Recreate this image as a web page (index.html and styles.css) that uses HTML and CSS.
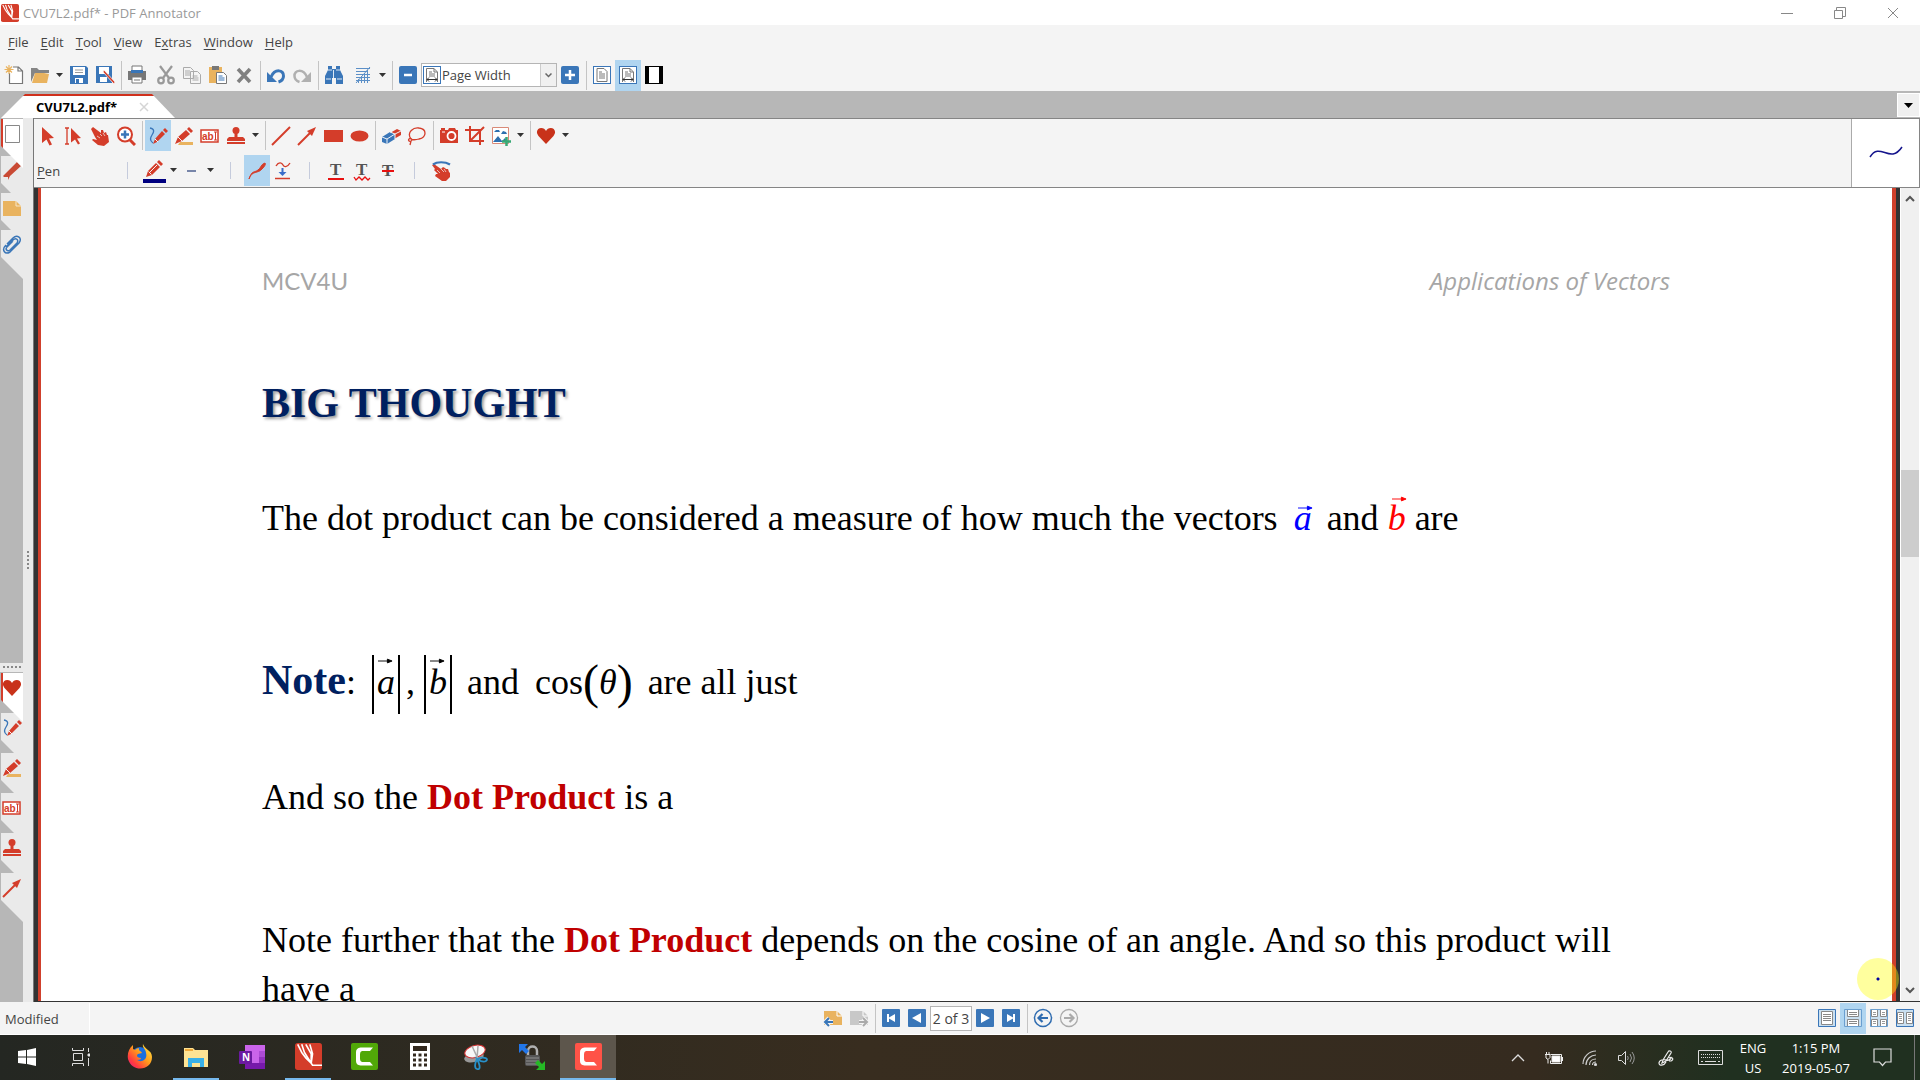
FILE: index.html
```html
<!DOCTYPE html>
<html lang="en">
<head>
<meta charset="utf-8">
<title>CVU7L2.pdf* - PDF Annotator</title>
<link rel="stylesheet" href="styles.css">
</head>
<body>
<svg class="defs" aria-hidden="true">
  <symbol id="logo" viewBox="0 0 20 20"><rect width="20" height="20" rx="2" fill="#d43d2a"/><path d="M2 1l3 6 3 4 4 4M5 1l2 6 5 8M8 1l4 7v7M11 1l2 7-1 7 1 1.500h7" fill="none" stroke="#fff" stroke-width="1.200"/></symbol>
  <symbol id="pencil" viewBox="0 0 20 20"><path d="M2 18l2-6 8-8 4 4-8 8z M13 3l2-2 4 4-2 2z" fill="#d43d2a"/><path d="M4.500 12.500l3 3M6 13l7-7" stroke="#f4f4f4" stroke-width="1"/></symbol>
  <symbol id="pen" viewBox="0 0 20 20"><path d="M2 2c5 1 4 4 2 7s-2 6 1 8" fill="none" stroke="#3a76b8" stroke-width="1.300"/><path d="M5 18l2-5 7-8 3 3-8 8z M15 4l2-2 3 3-2 2z" fill="#d43d2a"/><path d="M7 13l3 3" stroke="#f4f4f4"/></symbol>
  <symbol id="marker" viewBox="0 0 20 20"><path d="M6 16h13v3H4z" fill="#e9b35f"/><path d="M1 18l3-7 8-7 4 4-8 7z M13 3l2-2 4 4-2 2z" fill="#d43d2a"/><path d="M4 11l4 4" stroke="#f4f4f4"/></symbol>
  <symbol id="stamp" viewBox="0 0 20 20"><circle cx="10" cy="4.500" r="3.500" fill="#d43d2a"/><path d="M8.500 7h3v4H17l2 2v2H1v-2l2-2h5.500z" fill="#d43d2a"/><path d="M1 17h18" stroke="#d43d2a" stroke-width="2"/></symbol>
  <symbol id="arrow" viewBox="0 0 20 20"><path d="M1 19L14 6" stroke="#d43d2a" stroke-width="2"/><path d="M10 5l9-4-4 9z" fill="#d43d2a"/></symbol>
  <symbol id="heart" viewBox="0 0 20 20"><path d="M10 18L2.500 10C-1 5.500 2 2 5.200 2 7.500 2 9 3 10 5c1-2 2.500-3 4.800-3C18 2 21 5.500 17.500 10z" fill="#c8321a"/></symbol>
  <symbol id="cursor" viewBox="0 0 20 20"><path d="M4 1l12 11-5 .5 3 6-2.500 1-3-6L4 17z" fill="#d43d2a"/></symbol>
  <symbol id="hand" viewBox="0 0 20 20"><path d="M1 3l2-2 8 6V4l2 0 1 3 2-1 1 3 1 0 1 7-5 4-6-1-6-5 1-1 4 1-2-3z" fill="#d43d2a"/><path d="M10 8l2 2M13 7l2 3M7 10l3 2" stroke="#f4f4f4" stroke-width=".7"/></symbol>
  <symbol id="caret" viewBox="0 0 8 5"><path d="M0 0h7L3.500 4z" fill="#333"/></symbol>
  <symbol id="page" viewBox="0 0 20 20"><rect x="1.500" y="1.500" width="17" height="17" fill="#fff" stroke="#3a76b8"/><path d="M5 3.500h7l3 3v10H5z" fill="#fff" stroke="#777"/><path d="M7 7h3M7 9h6M7 11h6M7 13h6" stroke="#777"/></symbol>
  <symbol id="pagewidth" viewBox="0 0 20 20"><rect x="1.500" y="1.500" width="17" height="17" fill="#fff" stroke="#3a76b8"/><path d="M4.500 17V3.500H12l3.500 3.500v10M12 3.500V7h3" fill="none" stroke="#777"/><path d="M7 7h3M7 9h6M7 11h6" stroke="#777"/><path d="M5 14.500h10M7 12.500l-2 2 2 2M13 12.500l2 2-2 2" fill="none" stroke="#333"/></symbol>
  <symbol id="camtasia" viewBox="0 0 27 27"><rect width="27" height="27" rx="2" fill="currentColor"/><path d="M22 4.500H9.500Q5 5 5 9v9q0 4 4.500 4.500H22l-3-3.500h-8q-2-.5-2-3v-5q0-2.500 2-3h8z" fill="#fff"/></symbol>
</svg>

<header class="titlebar">
  <svg class="app-logo"><use href="#logo"/></svg>
  <span class="title">CVU7L2.pdf* - PDF Annotator</span>
  <div class="win-controls">
    <button aria-label="Minimize"><svg width="12" height="12"><path d="M0 6.500h12" stroke="#888"/></svg></button>
    <button aria-label="Restore"><svg width="12" height="12" fill="none" stroke="#888"><path d="M.5 3.500h8v8h-8zM2.500 3.500v-3h9v9h-3"/></svg></button>
    <button aria-label="Close"><svg width="12" height="12"><path d="M1 1l10 10M11 1L1 11" stroke="#888"/></svg></button>
  </div>
</header>

<nav class="menubar">
  <button><u>F</u>ile</button><button><u>E</u>dit</button><button><u>T</u>ool</button><button><u>V</u>iew</button><button>E<u>x</u>tras</button><button><u>W</u>indow</button><button><u>H</u>elp</button>
</nav>

<div class="toolbar">
  <button class="tb" aria-label="New"><svg viewBox="0 0 20 20"><path d="M5.500 8v10.500h13V6l-4-4H9M14 2v4h4" fill="#fff" stroke="#777" stroke-width="1.200"/><path d="M5 0v9M.5 4.500h9M2 1.500l6 6M8 1.500l-6 6" stroke="#e9b35f" stroke-width="1.200"/></svg></button>
  <button class="tb" aria-label="Open"><svg viewBox="0 0 20 20"><path d="M1 3h6l2 2h10v3H5L1 17z" fill="#858585"/><path d="M5 8h9l5 1-2 9H2z" fill="#e9b35f"/></svg></button>
  <button class="drop" aria-label="Open recent"><svg><use href="#caret"/></svg></button>
  <button class="tb" aria-label="Save"><svg viewBox="0 0 20 20"><path d="M1 1h16l2 2v16H1z" fill="#3a76b8"/><path d="M4 2h12v8H4zM6 13h8v5H6z" fill="#fff"/><path d="M6 5h8M6 7.500h8" stroke="#999"/><path d="M7 14h3v4H7z" fill="#3a76b8"/></svg></button>
  <button class="tb" aria-label="Save as"><svg viewBox="0 0 20 20"><path d="M1 1h16v17H1z" fill="#3a76b8"/><path d="M4 2h10v7H4zM5 12h7v5H5z" fill="#fff"/><path d="M9 5l11 12-1 2L8 7z" fill="#d43d2a" stroke="#fff" stroke-width=".7"/></svg></button>
  <span class="sep"></span>
  <button class="tb gap" aria-label="Print"><svg viewBox="0 0 20 20"><path d="M5 1h10v6H5z" fill="#fff" stroke="#777"/><path d="M1 6h18v9H1z" fill="#777"/><path d="M4 5h12v3H4z" fill="#3a76b8"/><path d="M5 12h10v6H5z" fill="#fff" stroke="#777"/><path d="M7 15h6" stroke="#777"/></svg></button>
  <button class="tb" aria-label="Cut"><svg viewBox="0 0 20 20" fill="none" stroke="#999" stroke-width="2.200"><path d="M4 1l9 12M16 1L7 13"/><circle cx="5" cy="15.500" r="2.800"/><circle cx="15" cy="15.500" r="2.800"/></svg></button>
  <button class="tb" aria-label="Copy"><svg viewBox="0 0 20 20" fill="#f4f4f4" stroke="#aaa"><path d="M1.500 2.500h7l3 3v8h-10zM8.500 6.500h7l3 3v9h-10z"/><path d="M3 6h5M3 8h5M3 10h5M10.500 11h5M10.500 13h6M10.500 15h6"/></svg></button>
  <button class="tb" aria-label="Paste"><svg viewBox="0 0 20 20"><path d="M1 2h13v16H1z" fill="#e9b35f"/><path d="M4 1h7v4H4z" fill="#777"/><path d="M8.500 7.500h7l3 3v8h-10z" fill="#fff" stroke="#777"/><path d="M10.500 11h4M10.500 13h6M10.500 15h6" stroke="#3a76b8"/></svg></button>
  <button class="tb" aria-label="Delete"><svg viewBox="0 0 20 20"><path d="M4 4l12 13M16 4L4 17" stroke="#808080" stroke-width="3.600"/></svg></button>
  <span class="sep"></span>
  <button class="tb" aria-label="Undo"><svg viewBox="0 0 20 20"><path d="M5 12C9 3 18 5 17.500 11c0 3-2 5-5 6" fill="none" stroke="#3a76b8" stroke-width="3"/><path d="M1 7v10h10z" fill="#3a76b8"/></svg></button>
  <button class="tb" aria-label="Redo"><svg viewBox="0 0 20 20"><path d="M15 12C11 3 2 5 2.500 11c0 3 2 5 5 6" fill="none" stroke="#b0b0b0" stroke-width="2.500"/><path d="M19 7v10H9z" fill="#b0b0b0"/></svg></button>
  <span class="sep"></span>
  <button class="tb gap" aria-label="Find"><svg viewBox="0 0 20 20"><path d="M4 1h4v3h4V1h4v4l3 6v8h-7v-6H8v6H1v-8l3-6z" fill="#3a76b8"/><path d="M4 5h4M12 5h4M9.500 5v8M2 14h5M13 14h5" stroke="#dce8f4"/></svg></button>
  <button class="tb" aria-label="Grid"><svg viewBox="0 0 20 20" stroke="#5b8fc7" fill="none"><path d="M3 3.500h14M3 6.500h11M3 9.500h14M3 12.500h14M3 15.500h14M5.500 14v4M8.500 11v7M11.500 8v10M14.500 5v13M3 18L17 2"/></svg></button>
  <button class="drop" aria-label="Grid options"><svg><use href="#caret"/></svg></button>
  <span class="sep"></span>
  <button class="tb" aria-label="Zoom out"><svg viewBox="0 0 20 20"><rect x="1" y="1" width="18" height="18" rx="2" fill="#3a76b8"/><path d="M6 10h8" stroke="#fff" stroke-width="2.500"/></svg></button>
  <div class="zoom-box"><svg class="zoom-icon"><use href="#pagewidth"/></svg><select aria-label="Zoom"><option>Page Width</option></select><span class="zoom-arrow"><svg width="7" height="5"><path d="M.5.5l3 3 3-3" fill="none" stroke="#666" stroke-width="1.500"/></svg></span></div>
  <button class="tb" aria-label="Zoom in"><svg viewBox="0 0 20 20"><rect x="1" y="1" width="18" height="18" rx="2" fill="#3a76b8"/><path d="M5 10h10M10 5v10" stroke="#fff" stroke-width="2.500"/></svg></button>
  <span class="sep"></span>
  <button class="tb" aria-label="Full page"><svg><use href="#page"/></svg></button>
  <button class="tb on" aria-label="Page width"><svg><use href="#pagewidth"/></svg></button>
  <button class="tb" aria-label="Full screen"><svg viewBox="0 0 20 20"><path d="M1 1h18v18H1z"/><path d="M5 2h10v16H5z" fill="#fff"/></svg></button>
</div>

<div class="tabstrip">
  <div class="doc-tab"><span>CVU7L2.pdf*</span><button aria-label="Close tab"><svg width="10" height="10"><path d="M1 1l8 8M9 1L1 9" stroke="#d5d5d5" stroke-width="1.500"/></svg></button></div>
  <button class="tab-list" aria-label="Documents"><svg width="9" height="5"><path d="M0 0h9L4.500 5z"/></svg></button>
</div>

<div class="workspace">
  <aside class="rail">
    <nav class="side-tabs">
      <button class="active" aria-label="Pages"><svg viewBox="0 0 20 20"><path d="M3.500 1.500h14v17h-14z" fill="#fff" stroke="#888"/></svg></button>
      <button aria-label="Annotations"><svg viewBox="0 0 20 20"><path d="M15 1l4 4L8 15l-2 4v-3H2l-1-1z" fill="#c94a34"/></svg></button>
      <button aria-label="Notes"><svg viewBox="0 0 20 20"><path d="M1 3h13l5 5v10H1z" fill="#e9b35f"/><path d="M14 3v5h5" fill="none" stroke="#f8e6c8"/></svg></button>
      <button aria-label="Attachments"><svg viewBox="0 0 20 20"><path d="M4 12l7-7c3-3 6 0 4 3l-7 7c-3 2-5-1-3-3l6-6M4 10c-5 5-1 10 4 7l9-9c4-5-2-9-6-5L5 9" fill="none" stroke="#3a76b8" stroke-width="1.500"/></svg></button>
    </nav>
    <div class="rail-dots"></div>
    <nav class="side-tabs favorites">
      <button class="active" aria-label="Favorites"><svg><use href="#heart"/></svg></button>
      <button aria-label="Pen"><svg><use href="#pen"/></svg></button>
      <button aria-label="Marker"><svg><use href="#marker"/></svg></button>
      <button aria-label="Text"><svg viewBox="0 0 20 20"><rect x="1" y="4" width="17" height="12" fill="#fff" stroke="#d43d2a" stroke-width="1.500"/><text x="2" y="14" class="glyph-ab">ab</text><path d="M14 6h3M14 14h3M15.500 6v8" stroke="#d43d2a" fill="none"/></svg></button>
      <button aria-label="Stamp"><svg><use href="#stamp"/></svg></button>
      <button aria-label="Arrow"><svg><use href="#arrow"/></svg></button>
    </nav>
  </aside>
  <div class="splitter"></div>
  <div class="main">
    <div class="tools">
      <div class="tool-rows">
        <div class="tool-row">
          <button class="tb" aria-label="Select"><svg><use href="#cursor"/></svg></button>
          <button class="tb" aria-label="Select text"><svg viewBox="0 0 20 20"><path d="M1 2h4M1 18h4M3 2v16" stroke="#d43d2a" stroke-width="1.300"/><path d="M7 2l10 10-4 .5 3 5-2 1-3-5-4 3z" fill="#d43d2a"/></svg></button>
          <button class="tb" aria-label="Pan"><svg><use href="#hand"/></svg></button>
          <button class="tb" aria-label="Zoom"><svg viewBox="0 0 20 20"><circle cx="9" cy="8.500" r="7" fill="#fff" stroke="#d43d2a" stroke-width="2"/><path d="M14 14l5 5" stroke="#d43d2a" stroke-width="3"/><path d="M5 8.500h8M9 4.500v8" stroke="#3a76b8" stroke-width="2.500"/></svg></button>
          <span class="sep"></span>
          <button class="tb on" aria-label="Pen tool"><svg><use href="#pen"/></svg></button>
          <button class="tb" aria-label="Marker tool"><svg><use href="#marker"/></svg></button>
          <button class="tb" aria-label="Text tool"><svg viewBox="0 0 20 20"><rect x="1" y="4" width="17" height="12" fill="#fff" stroke="#d43d2a" stroke-width="1.500"/><text x="2" y="14" class="glyph-ab">ab</text><path d="M14 6h3M14 14h3M15.500 6v8" stroke="#d43d2a" fill="none"/></svg></button>
          <button class="tb" aria-label="Stamp tool"><svg><use href="#stamp"/></svg></button>
          <button class="drop" aria-label="Stamps"><svg><use href="#caret"/></svg></button>
          <span class="sep"></span>
          <button class="tb" aria-label="Line"><svg viewBox="0 0 20 20"><path d="M1 19L19 1" stroke="#d43d2a" stroke-width="2"/></svg></button>
          <button class="tb" aria-label="Arrow tool"><svg><use href="#arrow"/></svg></button>
          <button class="tb" aria-label="Rectangle"><svg viewBox="0 0 20 20"><path d="M1 4h19v12H1z" fill="#d43d2a"/></svg></button>
          <button class="tb" aria-label="Ellipse"><svg viewBox="0 0 20 20"><ellipse cx="10.500" cy="10" rx="9" ry="5.500" fill="#d43d2a"/></svg></button>
          <span class="sep"></span>
          <button class="tb" aria-label="Eraser"><svg viewBox="0 0 20 20"><path d="M9 7l7-4 4 2v4l-7 4z" fill="#d43d2a"/><path d="M1 11l8-5 5 2v5l-8 5-5-2z" fill="#3a76b8"/><path d="M1 11l5 2 8-5 6-3M6 13v5M9 6l5 2v5" fill="none" stroke="#f0f4f8"/></svg></button>
          <button class="tb" aria-label="Lasso"><svg viewBox="0 0 20 20"><path d="M4 13C-1 6 7 1 12 2c8 1 8 9 0 11-3 1-7 1-8 0m-2 0c2-2 4 1 2 2s-3-1-2-2m2 2l-1 4" fill="none" stroke="#d43d2a" stroke-width="1.300"/></svg></button>
          <span class="sep"></span>
          <button class="tb" aria-label="Snapshot"><svg viewBox="0 0 20 20"><path d="M1 4h1V2h4v2h3l1-2h6l1 2h2v13H1z" fill="#d43d2a"/><circle cx="12.500" cy="10" r="4" fill="#d43d2a" stroke="#fff" stroke-width="1.800"/><path d="M3 6h3" stroke="#fff"/></svg></button>
          <button class="tb" aria-label="Crop"><svg viewBox="0 0 20 20"><path d="M5 0v15h14M0 4h15v15M5 15L19 1" fill="none" stroke="#d43d2a" stroke-width="2"/></svg></button>
          <button class="tb" aria-label="Insert image"><svg viewBox="0 0 20 20"><path d="M1.500 1.500h16v16h-16z" fill="#fff" stroke="#d98a78"/><path d="M2 16l5-6 4 5 3-3 3 4zM3 6l2-2h3l1 2zM10 8l2-3 3 1 1 2z" fill="#2e6fae"/><path d="M11 15.500h9M15.500 11v9" stroke="#37a874" stroke-width="2.500"/></svg></button>
          <button class="drop" aria-label="Image options"><svg><use href="#caret"/></svg></button>
          <span class="sep"></span>
          <button class="tb" aria-label="Favorite"><svg><use href="#heart"/></svg></button>
          <button class="drop" aria-label="Favorites list"><svg><use href="#caret"/></svg></button>
        </div>
        <div class="tool-row">
          <span class="tool-name"><u>P</u>en</span>
          <span class="sep wide"></span>
          <button class="tb color" aria-label="Color"><svg><use href="#pencil"/></svg></button>
          <button class="drop" aria-label="Colors"><svg><use href="#caret"/></svg></button>
          <button class="tb narrow" aria-label="Line width"><svg viewBox="0 0 20 20"><path d="M5 10h9" stroke="#334a80" stroke-width="1.300"/></svg></button>
          <button class="drop" aria-label="Line widths"><svg><use href="#caret"/></svg></button>
          <span class="sep wide"></span>
          <button class="tb on" aria-label="Pressure"><svg viewBox="0 0 20 20"><path d="M2 18c3-9 5-6 9-9 3-2 3-6 7-7 1 1 0 3-3 6-4 5-10 1-13 10" fill="#d43d2a" stroke="#d43d2a"/></svg></button>
          <button class="tb" aria-label="Smoothing"><svg viewBox="0 0 20 20"><path d="M3 5c3-5 6-3 7-1s4 3 7-2M2 17.500h15" fill="none" stroke="#d43d2a" stroke-width="1.400"/><path d="M8.500 7h2v4h3l-4 4-4-4h3z" fill="#3a6dc8"/></svg></button>
          <span class="sep wide"></span>
          <button class="tb" aria-label="Underline"><svg viewBox="0 0 20 20"><text x="4" y="14" class="glyph-t">T</text><path d="M2 18h16" stroke="#e81010" stroke-width="2"/></svg></button>
          <button class="tb" aria-label="Squiggly"><svg viewBox="0 0 20 20"><text x="4" y="14" class="glyph-t">T</text><path d="M2 16l2 3 3-3 3 3 3-3 3 3 2-2" fill="none" stroke="#e81010" stroke-width="1.300"/></svg></button>
          <button class="tb" aria-label="Strikeout"><svg viewBox="0 0 20 20"><text x="4" y="15" class="glyph-t">T</text><path d="M4 10h12" stroke="#e81010" stroke-width="2"/></svg></button>
          <span class="sep wide"></span>
          <button class="tb" aria-label="Touch"><svg viewBox="0 0 20 20"><path d="M1 4l2-1 7 5 2-2 2 1 1 1 2 0 1 3 1 1v4l-4 4h-4l-7-5 1-2 2 0-4-4 1-1z" fill="#d43d2a"/><path d="M2 3.500c4-3 12-3 17 0" fill="none" stroke="#3a76b8" stroke-width="2.200"/><path d="M10 8l3 3M13 8l2 3M6 9l3 3" stroke="#f4f4f4" stroke-width=".7"/></svg></button>
        </div>
      </div>
      <div class="preview"><svg width="34" height="14"><path d="M1 11C11-5 21 19 33 1" fill="none" stroke="#14148c" stroke-width="1.500"/></svg></div>
    </div>
    <div class="viewer">
      <article class="page">
        <div class="page-head"><span>MCV4U</span><em>Applications of Vectors</em></div>
        <h1>BIG THOUGHT</h1>
        <p class="measure">The dot product can be considered a measure of how much the vectors <span class="math"><i class="vec blue">a<svg viewBox="0 0 16 6"><path d="M0 3h11M10 1l5 2-5 2z"/></svg></i></span> and <i class="vec red tall">b<svg viewBox="0 0 16 6"><path d="M0 3h11M10 1l5 2-5 2z"/></svg></i> are</p>
        <p class="note"><strong>Note</strong>: <span class="math"><i class="vec abs">a<svg viewBox="0 0 16 6"><path d="M0 3h11M10 1l5 2-5 2z"/></svg></i><span class="comma">,</span> <i class="vec abs">b<svg viewBox="0 0 16 6"><path d="M0 3h11M10 1l5 2-5 2z"/></svg></i></span> and <span class="math">cos<span class="paren">(</span><i>θ</i><span class="paren">)</span></span> are all just</p>
        <p class="so">And so the <b>Dot Product</b> is a</p>
        <p class="further">Note further that the <b>Dot Product</b> depends on the cosine of an angle. And so this product will have a</p>
      </article>
      <div class="scrollbar">
        <button aria-label="Scroll up"><svg width="10" height="7"><path d="M1 6l4-4 4 4" fill="none" stroke="#555" stroke-width="2"/></svg></button>
        <div class="track"><div class="thumb"></div></div>
        <button aria-label="Scroll down"><svg width="10" height="7"><path d="M1 1l4 4 4-4" fill="none" stroke="#555" stroke-width="2"/></svg></button>
      </div>
      <div class="pen-spot"></div>
    </div>
  </div>
</div>

<footer class="status">
  <div class="status-left"><span>Modified</span></div>
  <div class="status-nav">
    <button class="tb" aria-label="Previous note"><svg viewBox="0 0 20 20"><path d="M1 3h13l5 5v9H1z" fill="#e9b35f"/><path d="M14 3v5h5" stroke="#fff" fill="none"/><path d="M10 14H3M6 10l-4 4 4 4" stroke="#f4f4f4" stroke-width="4" fill="none"/><path d="M10 14H3M6 10l-4 4 4 4" stroke="#3a76b8" stroke-width="2" fill="none"/></svg></button>
    <button class="tb" aria-label="Next note"><svg viewBox="0 0 20 20"><path d="M1 3h13l5 5v9H1z" fill="#c8c8c8"/><path d="M14 3v5h5" stroke="#fff" fill="none"/><path d="M10 14h7M14 10l4 4-4 4" stroke="#f4f4f4" stroke-width="4" fill="none"/><path d="M10 14h7M14 10l4 4-4 4" stroke="#aaa" stroke-width="2" fill="none"/></svg></button>
    <span class="sep"></span>
    <button class="tb" aria-label="First page"><svg viewBox="0 0 20 20"><rect x="1" y="1" width="18" height="18" rx="1" fill="#3a76b8"/><path d="M6 6h2v3.500L14 6v8l-6-3.500V14H6z" fill="#fff"/></svg></button>
    <button class="tb" aria-label="Previous page"><svg viewBox="0 0 20 20"><rect x="1" y="1" width="18" height="18" rx="1" fill="#3a76b8"/><path d="M14 5v10l-9-5z" fill="#fff"/></svg></button>
    <input aria-label="Page" value="2 of 3">
    <button class="tb" aria-label="Next page"><svg viewBox="0 0 20 20"><rect x="1" y="1" width="18" height="18" rx="1" fill="#3a76b8"/><path d="M6 5v10l9-5z" fill="#fff"/></svg></button>
    <button class="tb" aria-label="Last page"><svg viewBox="0 0 20 20"><rect x="1" y="1" width="18" height="18" rx="1" fill="#3a76b8"/><path d="M14 6h-2v3.500L6 6v8l6-3.500V14h2z" fill="#fff"/></svg></button>
    <span class="sep"></span>
    <button class="tb" aria-label="Back"><svg viewBox="0 0 20 20" fill="none" stroke="#2f6cb0"><circle cx="10" cy="10" r="8.500" stroke-width="1.500"/><path d="M15 10H6M9.500 6L5.500 10l4 4" stroke-width="2.200"/></svg></button>
    <button class="tb" aria-label="Forward"><svg viewBox="0 0 20 20" fill="none" stroke="#aaa"><circle cx="10" cy="10" r="8.500" stroke-width="1.300"/><path d="M5 10h9M10.500 6l4 4-4 4" stroke-width="2.200"/></svg></button>
  </div>
  <div class="status-views">
    <button class="tb" aria-label="Single page"><svg viewBox="0 0 20 20"><path d="M1.500 1.500h17v17h-17z" fill="#c9dff0" stroke="#3a76b8"/><path d="M4.500 3.500h11v13h-11z" fill="#fff" stroke="#888"/><path d="M6 6.500h8M6 8.500h8M6 10.500h8M6 12.500h8" stroke="#888"/></svg></button>
    <button class="tb on" aria-label="Continuous"><svg viewBox="0 0 20 20"><path d="M1.500 1.500h17v17h-17z" fill="#c9dff0" stroke="#6a9fd0"/><path d="M4.500 2v6.500h11V2M4.500 18v-6.500h11V18" fill="#fff" stroke="#888"/><path d="M6 4.500h8M6 6.500h8M6 13.500h8M6 15.500h8" stroke="#888"/></svg></button>
    <button class="tb" aria-label="Two pages continuous"><svg viewBox="0 0 20 20"><path d="M1.500 1.500h17v17h-17z" fill="#c9dff0" stroke="#6a9fd0"/><path d="M2.500 2v6.500h6V2M11.500 2v6.500h6V2M2.500 18v-6.500h6V18M11.500 18v-6.500h6V18" fill="#fff" stroke="#888"/><path d="M4 4.500h3M13 4.500h3M4 6.500h3M13 6.500h3M4 13.500h3M13 13.500h3M4 15.500h3M13 15.500h3" stroke="#999"/></svg></button>
    <button class="tb" aria-label="Two pages"><svg viewBox="0 0 20 20"><path d="M1.500 1.500h17v17h-17z" fill="#c9dff0" stroke="#3a76b8"/><path d="M2.500 4.500h6v11h-6zM11.500 4.500h6v11h-6z" fill="#fff" stroke="#888"/><path d="M4 6.500h3M13 6.500h3M4 8.500h3M13 8.500h3M4 10.500h3M13 10.500h3M4 12.500h3M13 12.500h3" stroke="#999"/></svg></button>
  </div>
</footer>

<div class="taskbar">
  <button aria-label="Start"><svg width="18" height="18" fill="#fff"><path d="M0 3l8-1v6.500H0zM9 2l9-2v8.500H9zM0 9.500h8V16l-8-1zM9 9.500h9V18l-9-2z"/></svg></button>
  <button class="task-view" aria-label="Task view"><svg width="18" height="18" fill="none" stroke="#ddd"><path d="M.5 0v2.500h11V0M.5 18v-2.500h11V18M1.500 5.500h9v7h-9zM16.500 0v4M16.500 10v8"/><path d="M16 6h2v2h-2z" fill="#fff"/></svg></button>
  <button class="app" aria-label="Firefox"><svg width="26" height="26" viewBox="0 0 26 26"><defs><linearGradient id="fx" x1="1" y1="0" x2="0" y2="1"><stop offset="0" stop-color="#fff14a"/><stop offset=".45" stop-color="#ff9a1c"/><stop offset=".75" stop-color="#ff3b3f"/><stop offset="1" stop-color="#e3168a"/></linearGradient></defs><circle cx="13" cy="12" r="9" fill="#1a6fe0"/><path d="M16 0c-1 4 3 5 3 9 2 7-5 10-9 7 3 0 4-1 4-2-4 0-5-3-3-4l4-1c-1-2-4-2-3-5-2 0-3 1-4 2L6 5V1C2 4 0 10 1 15c4 14 24 12 24-2C25 6 18 6 16 0z" fill="url(#fx)"/></svg></button>
  <button class="app open" aria-label="File Explorer"><svg width="24" height="20"><path d="M0 1h9l2 2h13v17H0z" fill="#fde394"/><path d="M1 3h8" stroke="#f0a93a" stroke-width="2"/><path d="M4 20v-9h16v9h-4v-4H8v4z" fill="#39b0e8"/></svg></button>
  <button class="app" aria-label="OneNote"><svg width="26" height="24"><path d="M6 0h20v24H6z" fill="#ca64ea"/><path d="M20 6h6v6h-6z" fill="#ae4bd5"/><path d="M20 12h6v6h-6z" fill="#9332bf"/><path d="M6 18h20v6H6z" fill="#7719aa"/><rect y="6" width="13" height="13" rx="1" fill="#6b1aa0"/><text x="3" y="16" class="glyph-n">N</text></svg></button>
  <button class="app open" aria-label="PDF Annotator"><svg width="27" height="27"><use href="#logo"/></svg></button>
  <button class="app green" aria-label="Camtasia"><svg width="27" height="27"><use href="#camtasia"/></svg></button>
  <button class="app" aria-label="Calculator"><svg width="20" height="27"><path d="M0 0h20v27H0z" fill="#fff"/><path d="M3 3h14v5H3z" fill="#33291e"/><path d="M3 12h14M3 17h14M3 22h14" stroke="#33291e" stroke-width="3" stroke-dasharray="3 2.500"/></svg></button>
  <button class="app" aria-label="Snipping Tool"><svg width="26" height="26"><ellipse cx="11" cy="13" rx="10" ry="5" fill="#999" transform="rotate(-15 11 13)"/><ellipse cx="12" cy="7.500" rx="10.500" ry="6" fill="#f8f8f8" stroke="#d03030" transform="rotate(-15 12 7.500)"/><path d="M9 2l6 13M15 2l-1 13" stroke="#aaa" stroke-width="1.500"/><path d="M14 15c8-3 12 0 9 2s-6 0-9-2c4 8 3 11 0 10s-2-6 0-10" fill="none" stroke="#2890c8" stroke-width="1.800"/></svg></button>
  <button class="app" aria-label="Screen lock"><svg width="26" height="26"><path d="M9 12V7c0-6 9-6 9 0v5" fill="none" stroke="#b0b0b0" stroke-width="2.500"/><rect x="6" y="11" width="15" height="11" rx="2" fill="#555"/><path d="M7 14h13M7 17h13M7 20h13" stroke="#909090"/><path d="M0 0h9L6 3l4 4-3 3-4-4-3 3z" fill="#2276e8"/><path d="M26 26h-9l3-3-4-4 3-3 4 4 3-3z" fill="#25b825"/></svg></button>
  <button class="app current" aria-label="Camtasia Recorder"><svg width="27" height="27"><use href="#camtasia"/></svg></button>
  <div class="tray">
    <button aria-label="Hidden icons"><svg width="14" height="8"><path d="M1 7l6-6 6 6" fill="none" stroke="#ddd" stroke-width="1.300"/></svg></button>
    <button aria-label="Battery"><svg width="18" height="12" fill="none" stroke="#eee"><path d="M5.500 2.500h11v9h-11v-3M17.500 5v4"/><path d="M7 4h8v6H7z" fill="#fff"/><path d="M0 2.500h5v3l-2 2v4M1.500 0v2M4 0v2M1 3v3l2 1.500"/></svg></button>
    <button aria-label="Wi-Fi"><svg width="16" height="16" fill="none" stroke="#ccc" stroke-width="1.200"><path d="M1 14C1 7 7 1 14 1M4 15c0-6 5-10 10-10M7.500 15c0-4 3-6 6.500-6M10.500 15c0-2 1.500-3 3.500-3"/><circle cx="13.500" cy="14.500" r="1" fill="#fff"/></svg></button>
    <button aria-label="Volume"><svg width="17" height="14" fill="none" stroke="#ddd"><path d="M.5 4.500h3l4-4v13l-4-4h-3z"/><path d="M9.500 5q1.500 2 0 4M12 3q3 4 0 8M14 1q4.500 6 0 12" stroke="#999"/></svg></button>
    <button class="roomy" aria-label="Ink workspace"><svg width="16" height="16" fill="none" stroke="#eee" stroke-width="1.200"><path d="M5 10l5-8c1-2 4-1 3 1l-5 8-4 2zM8 12c-2 4-7 4-7 1s5-4 7-3 6-1 5-3M11 8c4-2 5 2 2 3h-2"/></svg></button>
    <button class="roomy" aria-label="Keyboard"><svg width="25" height="15" fill="none" stroke="#ddd"><path d="M.5.5h24v14H.5z"/><path d="M3 4.500h19M3 7.500h19" stroke-dasharray="1 1"/><path d="M3 11.500h2M7 11.500h11M20 11.500h2"/></svg></button>
    <button class="stack lang"><span>ENG</span><span>US</span></button>
    <button class="stack clock"><span>1:15 PM</span><span>2019-05-07</span></button>
    <button class="action" aria-label="Notifications"><svg width="19" height="19" fill="none" stroke="#ddd" stroke-width="1.200"><path d="M1 1h17v13h-5.500l-3 3.500-3-3.500H1z"/></svg></button>
    <button class="desktop" aria-label="Show desktop"></button>
  </div>
</div>
</body>
</html>
```
FILE: styles.css
```css
* { box-sizing: border-box; }
body {
  margin: 0;
  height: 100vh;
  display: flex;
  flex-direction: column;
  overflow: hidden;
  background: #f4f4f4;
  color: #444;
  font: 13px/20px "Open Sans", "Noto Sans", sans-serif;
}
button, input, select { font: inherit; color: inherit; }
button {
  display: flex;
  align-items: center;
  justify-content: center;
  padding: 0;
  border: 0;
  background: none;
}
svg { flex: none; }
.defs { position: absolute; width: 0; height: 0; }
u { text-underline-offset: 2px; }

/* Title and menu */
.titlebar {
  flex: none;
  height: 25px;
  display: flex;
  align-items: center;
  gap: 4px;
  padding-left: 1px;
  background: #fff;
  color: #999;
}
.app-logo { width: 18px; height: 18px; }
.win-controls { display: flex; margin: 0 1px 0 auto; }
.win-controls button { width: 53px; height: 25px; }
.menubar { flex: none; display: flex; height: 34px; padding-left: 2px; }
.menubar button { padding: 0 6px; }

/* Toolbars */
.toolbar { flex: none; display: flex; align-items: center; height: 32px; padding-left: 1px; }
.tb { flex: none; width: 26px; height: 31px; }
.tb svg { width: 20px; height: 20px; }
.tb.gap { margin-right: 3px; }
.tb.narrow { width: 24px; }
.tb.on { background: #b0d5f0; }
.drop { flex: none; width: 13px; height: 30px; justify-content: flex-start; padding-left: 3px; }
.drop svg { width: 8px; height: 5px; }
.sep { flex: none; width: 1px; height: 29px; margin: 0 2px 0 3px; background: #c4c4c4; }
.sep.wide { height: 17px; margin: 0 13px; background: #c5cbdc; }
.zoom-box {
  display: flex;
  align-items: center;
  width: 136px;
  height: 24px;
  border: 1px solid #b5b5b5;
  background: #fff;
}
.zoom-icon { width: 20px; height: 20px; }
.zoom-box select { flex: 1; min-width: 0; appearance: none; border: 0; padding: 0; background: none; }
.zoom-arrow {
  display: flex;
  align-items: center;
  justify-content: center;
  align-self: stretch;
  width: 16px;
  border-left: 1px solid #ccc;
  background: #f0f0f0;
}

/* Document tabs */
.tabstrip {
  flex: none;
  display: flex;
  justify-content: space-between;
  height: 27px;
  background: #b7b7b7;
}
.doc-tab {
  display: flex;
  align-items: center;
  gap: 22px;
  align-self: flex-end;
  width: 174px;
  height: 24px;
  margin-left: 1px;
  padding: 2px 0 0 35px;
  background: linear-gradient(#d0301c 2px, #fff 2px);
  clip-path: polygon(24px 0, 151px 0, 100% 100%, 0 100%);
  color: #000;
  font-weight: bold;
}
.tab-list { width: 23px; height: 24px; margin-top: 2px; border: 1px solid #fff; background: #f0f0f0; }

/* Side rail */
.workspace { flex: 1; min-height: 0; display: flex; }
.rail { flex: none; display: flex; flex-direction: column; width: 23px; background: #b7b7b7; }
.side-tabs { flex: 1; padding: 1px 0 0 1px; }
.side-tabs button {
  position: relative;
  width: 22px;
  height: 49px;
  margin-bottom: -12px;
  padding-top: 5px;
  align-items: flex-start;
  background: #eaeaea;
  clip-path: polygon(0 0, 100% 0, 100% 100%, 0 27px);
}
.side-tabs button.active { z-index: 1; background: linear-gradient(90deg, #d43d2a 2px, #fff 2px); }
.side-tabs svg { width: 20px; height: 20px; }
.favorites { flex: none; height: 330px; }
.favorites button { margin-bottom: -9px; }
.rail-dots {
  height: 9px;
  background: repeating-linear-gradient(90deg, #888 0 2px, transparent 2px 4px) 3px 3px / 18px 2px no-repeat, #eaeaea;
}
.splitter {
  flex: none;
  width: 10px;
  background: repeating-linear-gradient(#888 0 2px, transparent 2px 4px) 4px 433px / 2px 18px no-repeat, #eaeaea;
}

/* Tool panel */
.main { flex: 1; min-width: 0; display: flex; flex-direction: column; border-left: 1px solid #777; }
.tools {
  flex: none;
  display: flex;
  height: 70px;
  border: solid #858585;
  border-width: 1px 1px 1px 0;
}
.tool-rows { flex: 1; padding: 1px 0 0 1px; }
.tool-row { display: flex; align-items: center; height: 31px; margin-bottom: 4px; }
.tool-name { width: 90px; padding-left: 2px; }
.tool-row .sep.wide:nth-child(2) { margin-left: 2px; }
.color { flex-direction: column; }
.color::after { content: ""; width: 23px; height: 4px; background: #000080; }
.glyph-t { font: bold 17px "Liberation Serif", serif; fill: #555; }
.glyph-ab { font: bold 10px "Liberation Sans", sans-serif; fill: #d43d2a; }
.glyph-n { font: bold 10px "Open Sans", sans-serif; fill: #fff; }
.preview {
  display: flex;
  align-items: center;
  justify-content: center;
  width: 68px;
  border-left: 1px solid #aaa;
  background: #fff;
}

/* Document */
.viewer {
  position: relative;
  flex: 1;
  min-height: 0;
  display: flex;
  border-bottom: 1px solid #333;
  background: #333;
  padding-left: 4px;
}
.page {
  flex: 1;
  overflow: hidden;
  margin-right: 4px;
  padding: 77px 222px 0 221px;
  border: solid #d0402c;
  border-width: 0 4px 0 3px;
  background: #fff;
  color: #000;
  font: 36px/48px "Liberation Serif", serif;
}
.page-head {
  display: flex;
  justify-content: space-between;
  color: #a6a6a6;
  font: 24px/32px Lato, "Open Sans", sans-serif;
}
.page-head em { font-family: "Open Sans", sans-serif; }
.page h1 {
  margin: 78px 0 0;
  color: #002060;
  font-size: 42px;
  line-height: 56px;
  text-shadow: 2px 2px 3px #999;
}
.page p { margin: 0; }
.page .measure { margin-top: 63px; }
.page .note { margin-top: 113px; }
.page .so { margin-top: 59px; }
.page .further { margin-top: 95px; line-height: 49px; }
.note strong { color: #002060; font-size: 42px; }
.page b { color: #c00000; }
.math { margin: 0 6px 0 7px; }
.comma { margin-left: 6px; }
.vec { position: relative; display: inline-block; }
.vec svg {
  position: absolute;
  top: 11px;
  right: -1px;
  width: 15px;
  height: 6px;
  fill: currentColor;
  stroke: currentColor;
}
.vec.tall svg { top: 2px; }
.vec.blue { color: #00f; }
.vec.red { color: #f00; }
.vec.abs {
  width: 28px;
  padding: 0 0 4px 3px;
  border: solid #000;
  border-width: 0 2px;
  line-height: 55px;
}
.vec.abs svg { right: 5px; top: 3px; }
.paren { font-size: 48px; line-height: 0; vertical-align: -4px; }
.scrollbar {
  display: flex;
  flex-direction: column;
  width: 20px;
  border: solid #fff;
  border-width: 0 1px;
  background: #f0f0f0;
}
.scrollbar button { height: 21px; }
.track { flex: 1; padding-top: 261px; }
.thumb { height: 87px; background: #cdcdcd; }
.pen-spot {
  position: absolute;
  right: 21px;
  bottom: 1px;
  width: 42px;
  height: 42px;
  border-radius: 50%;
  background: radial-gradient(#0000a0 1px, rgba(255, 255, 0, .38) 2px);
}

/* Status bar */
.status { flex: none; display: flex; align-items: center; height: 33px; border-bottom: 1px solid #fff; }
.status-left, .status-views { flex: 1; display: flex; }
.status-left span { width: 90px; padding: 6px 5px 5px; border-right: 1px solid #fff; }
.status-nav { display: flex; align-items: center; padding-right: 16px; }
.status-nav input {
  width: 42px;
  height: 25px;
  padding: 0;
  border: 1px solid #b5b5b5;
  background: #fff;
  font-size: 14px;
  text-align: center;
}
.status-views { justify-content: flex-end; padding-right: 2px; }

/* Taskbar */
.taskbar {
  flex: none;
  display: flex;
  height: 45px;
  background: linear-gradient(90deg, #242722, #382d1f 45%, #352b1f 80%, #203020 90%);
  color: #fff;
}
.taskbar > button { width: 54px; border-bottom: 2px solid transparent; }
.taskbar > .task-view { margin-right: 4px; }
.taskbar > .app { width: 56px; }
.taskbar > .open { width: 46px; margin: 0 5px; border-color: #76b9ed; }
.taskbar > .current { border-color: #76b9ed; background: #5d564c; color: #ff5347; }
.taskbar > .green { color: #51a808; border-color: transparent; }
.tray { display: flex; margin-left: auto; }
.tray button { width: 36px; }
.tray .roomy { width: 44px; }
.tray .stack { flex-direction: column; }
.tray .lang { width: 42px; }
.tray .clock { width: 84px; }
.tray .action { width: 56px; padding-right: 8px; }
.tray .desktop { width: 6px; border-left: 1px solid #777; }
```
